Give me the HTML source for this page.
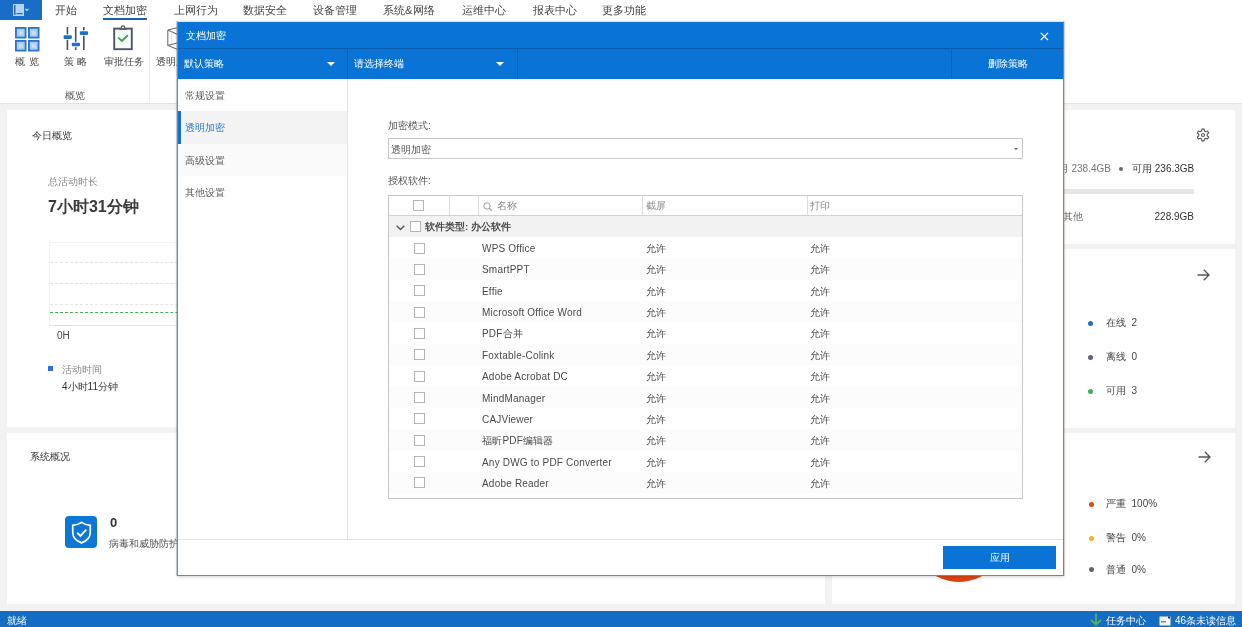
<!DOCTYPE html>
<html><head><meta charset="utf-8">
<style>
*{margin:0;padding:0;box-sizing:border-box}
html,body{-webkit-font-smoothing:antialiased;width:1242px;height:627px;overflow:hidden;background:#f2f2f2;font-family:"Liberation Sans",sans-serif;color:#333;font-size:10.4px}
.a{position:absolute;white-space:nowrap}
#root{position:absolute;left:0;top:0;width:1242px;height:627px;will-change:transform}
#menubar{position:absolute;left:0;top:0;width:1242px;height:20px;background:#fff}
#ribbon{position:absolute;left:0;top:20px;width:1242px;height:84px;background:#fff;border-bottom:1px solid #e2e2e2}
.tab{position:absolute;top:2px;font-size:11.3px;color:#444;line-height:16px}
.card{position:absolute;background:#fff}
#status{position:absolute;left:0;top:611px;width:1242px;height:16px;background:#146dc3;color:#fff}
#dlg{position:absolute;left:177px;top:21px;width:887px;height:555px;background:#fff;border:1px solid #7189a3;border-top-color:#dfe6ee;border-right-color:#5a8cc4;box-shadow:-1px 0 0 rgba(110,130,150,.35),1px 0 0 rgba(150,120,100,.25),0 1px 3px rgba(60,50,40,.22)}
.sb{padding-left:7px;line-height:34px;font-size:10px;color:#5a5a5a}
.lbl{font-size:10px;color:#555;line-height:12px}
.cb{width:11px;height:11px;border:1px solid #b4b4b4;background:#fff}
.td{font-size:10px;color:#4a4a4a;letter-spacing:0.2px}
.th{font-size:10px;color:#888;line-height:20px}
</style></head><body><div id="root">

<div id="menubar">
  <div class="a" style="left:0;top:0;width:42px;height:19.5px;background:#196dc6"></div>
  <svg class="a" style="left:12px;top:3px" width="18" height="14" viewBox="0 0 18 14"><rect x="1" y="1" width="11" height="12" fill="#b4d4f4"/><rect x="2.2" y="2" width="1.2" height="10" fill="#1c4f8a"/><rect x="4.5" y="10.2" width="6" height="1" fill="#1c4f8a"/><path d="M13.3 5.8 L14.9 7.4 L16.5 5.8" fill="none" stroke="#c0dcf7" stroke-width="1.1"/></svg>
  <div class="tab" style="left:55px">开始</div>
  <div class="tab" style="left:103px">文档加密</div>
  <div class="a" style="left:103px;top:18px;width:44px;height:2px;background:#1a5fb4"></div>
  <div class="tab" style="left:174px">上网行为</div>
  <div class="tab" style="left:243px">数据安全</div>
  <div class="tab" style="left:312.5px">设备管理</div>
  <div class="tab" style="left:383px">系统&amp;网络</div>
  <div class="tab" style="left:462px">运维中心</div>
  <div class="tab" style="left:532.5px">报表中心</div>
  <div class="tab" style="left:602px">更多功能</div>
</div>

<div id="ribbon">
  <svg class="a" style="left:15px;top:7px" width="25" height="25" viewBox="0 0 25 25">
    <g fill="#a9cdf2" stroke="#2a74c9" stroke-width="1.8">
      <rect x="0.9" y="0.9" width="9.7" height="9.7"/><rect x="13.9" y="0.9" width="9.7" height="9.7"/>
      <rect x="0.9" y="13.9" width="9.7" height="9.7"/><rect x="13.9" y="13.9" width="9.7" height="9.7"/>
    </g>
    <g fill="#c9def5"><rect x="3.8" y="3.8" width="4" height="4"/><rect x="16.8" y="3.8" width="4" height="4"/><rect x="3.8" y="16.8" width="4" height="4"/><rect x="16.8" y="16.8" width="4" height="4"/></g>
  </svg>
  <div class="a" style="left:15px;top:35px;font-size:10.4px;color:#444;letter-spacing:4.2px">概览</div>
  <svg class="a" style="left:63px;top:7px" width="26" height="24" viewBox="0 0 26 24">
    <g stroke="#4a4f57" stroke-width="1.6"><line x1="4.4" y1="0" x2="4.4" y2="23"/><line x1="12.7" y1="0" x2="12.7" y2="23"/><line x1="20.8" y1="0" x2="20.8" y2="23"/></g>
    <g fill="#fff"><rect x="0.8" y="7.4" width="7.8" height="5.4"/><rect x="9" y="14.8" width="7.8" height="5.4"/><rect x="17" y="3.4" width="7.9" height="5.4"/></g><g fill="#1f6fc6"><rect x="0.6" y="8.3" width="8.2" height="3.6" rx="0.8"/><rect x="8.8" y="15.7" width="8.2" height="3.6" rx="0.8"/><rect x="16.8" y="4.3" width="8.2" height="3.6" rx="0.8"/></g>
  </svg>
  <div class="a" style="left:63.5px;top:35px;font-size:10.4px;color:#444;letter-spacing:3.6px">策略</div>
  <svg class="a" style="left:112px;top:5px" width="22" height="26" viewBox="0 0 22 26">
    <rect x="2.2" y="3.6" width="17.6" height="20.6" fill="#f6fbf6" stroke="#4d566a" stroke-width="1.9"/>
    <path d="M7.3 3.6 H14.7 V4.8 H7.3 Z" fill="#4d566a"/>
    <circle cx="11" cy="2.4" r="1.6" fill="#fff" stroke="#4d566a" stroke-width="1.3"/>
    <path d="M6.2 12.6 L9.9 16 L15.8 10.2" fill="none" stroke="#46a04e" stroke-width="1.9"/>
  </svg>
  <div class="a" style="left:104px;top:35px;font-size:10px;color:#444">审批任务</div>
  <div class="a" style="left:149px;top:6px;width:1px;height:76px;background:#ededed"></div>
  <svg class="a" style="left:166px;top:7px" width="14" height="24" viewBox="0 0 14 24">
    <g fill="none" stroke="#6f6f6f" stroke-width="1.1"><path d="M1.8 3 L13 0.3 M1.8 3 L1.8 18.5 L13 23 M1.8 3 L13 8 M1.8 18.5 L13 15.5"/></g><path d="M5.5 4.5 L5.5 17" stroke="#ddd" stroke-width="0.8"/>
  </svg>
  <div class="a" style="left:156px;top:35px;font-size:10px;color:#444">透明加密</div>
  <div class="a" style="left:65px;top:69px;font-size:10.4px;color:#555">概览</div>
</div>

<div class="card" style="left:7px;top:110px;width:818px;height:317px">
  <div class="a" style="left:25px;top:19px;font-size:10px;color:#333;line-height:14px">今日概览</div>
  <div class="a" style="left:41px;top:65px;font-size:10px;color:#888;line-height:14px">总活动时长</div>
  <div class="a" style="left:41px;top:87px;font-size:16px;font-weight:bold;color:#3a3a3a;line-height:20px">7小时31分钟</div>
  <div class="a" style="left:42px;top:132px;width:780px;height:84px;border-left:1px solid #f2f2f2;border-top:1px solid #f2f2f2;border-bottom:1px solid #e8e8e8"></div>
  <div class="a" style="left:43px;top:152px;width:780px;border-top:1px dashed #e2e2e2"></div>
  <div class="a" style="left:43px;top:173px;width:780px;border-top:1px dashed #e2e2e2"></div>
  <div class="a" style="left:43px;top:194px;width:780px;border-top:1px dashed #e2e2e2"></div>
  <div class="a" style="left:43px;top:202px;width:780px;border-top:1px dashed #4caa50"></div>
  <div class="a" style="left:48px;top:214.5px;width:17px;height:1.5px;background:#d6d6d6"></div>
  <div class="a" style="left:50px;top:219px;font-size:10px;color:#444;line-height:14px">0H</div>
  <div class="a" style="left:41px;top:256px;width:5px;height:5px;background:#2f6fd6"></div>
  <div class="a" style="left:55px;top:252.5px;font-size:10px;color:#888;line-height:14px">活动时间</div>
  <div class="a" style="left:55px;top:270px;font-size:10px;color:#333;line-height:14px">4小时11分钟</div>
</div>
<div class="card" style="left:7px;top:433px;width:818px;height:171px">
  <div class="a" style="left:23px;top:17px;font-size:10px;color:#333;line-height:14px">系统概况</div>
  <div class="a" style="left:58px;top:83px;width:32px;height:32px;background:#0b78d8;border-radius:4px"></div>
  <svg class="a" style="left:62.5px;top:87.5px" width="23" height="23" viewBox="0 0 20 20"><path d="M10 1.2 C12.3 2.8 14.5 3.6 17.6 3.8 L17.6 10 C17.6 14.5 14 17.5 10 19 C6 17.5 2.4 14.5 2.4 10 L2.4 3.8 C5.5 3.6 7.7 2.8 10 1.2 Z" fill="none" stroke="#fff" stroke-width="1.5"/><path d="M6.3 10.2 L9.1 13 L14.2 7.6" fill="none" stroke="#fff" stroke-width="1.6"/></svg>
  <div class="a" style="left:103px;top:83px;font-size:13px;font-weight:bold;color:#333;line-height:14px">0</div>
  <div class="a" style="left:102px;top:104px;font-size:10px;color:#555;line-height:14px">病毒和威胁防护</div>
</div>
<div class="card" style="left:832px;top:110px;width:403px;height:134px">
  <svg class="a" style="left:363.5px;top:17.5px" width="14" height="14" viewBox="0 0 14 14"><path d="M5.86 1.11 L8.14 1.11 L8.40 2.93 L9.82 3.75 L11.53 3.06 L12.67 5.05 L11.22 6.18 L11.22 7.82 L12.67 8.95 L11.53 10.94 L9.82 10.25 L8.40 11.07 L8.14 12.89 L5.86 12.89 L5.60 11.07 L4.18 10.25 L2.47 10.94 L1.33 8.95 L2.78 7.82 L2.78 6.18 L1.33 5.05 L2.47 3.06 L4.18 3.75 L5.60 2.93Z" fill="none" stroke="#555" stroke-width="1.1" stroke-linejoin="round"/><circle cx="7" cy="7" r="1.5" fill="none" stroke="#555" stroke-width="1.1"/></svg>
  <div class="a" style="left:216px;top:52px;font-size:10px;color:#666;line-height:14px">已用</div><div class="a" style="left:239.5px;top:52px;font-size:10px;color:#777;line-height:14px">238.4GB</div>
  <div class="a" style="left:287px;top:57px;width:4px;height:4px;border-radius:50%;background:#666"></div>
  <div class="a" style="left:300px;top:52px;font-size:10px;color:#333;line-height:14px">可用 236.3GB</div>
  <div class="a" style="left:180px;top:79px;width:182px;height:5px;background:#e6e6e6"></div>
  <div class="a" style="left:231px;top:100px;font-size:10px;color:#666;line-height:14px">其他</div>
  <div class="a" style="left:300px;top:100px;width:62px;text-align:right;font-size:10px;color:#333;line-height:14px">228.9GB</div>
</div>
<div class="card" style="left:832px;top:249px;width:403px;height:179px">
  <svg class="a" style="left:365px;top:20px" width="13" height="12" viewBox="0 0 13 12"><path d="M0.5 6 H12 M6.8 0.8 L12 6 L6.8 11.2" fill="none" stroke="#555" stroke-width="1.3"/></svg>
  <div class="a" style="left:256px;top:72px;width:5px;height:5px;border-radius:50%;background:#1f6fc6"></div>
  <div class="a" style="left:274px;top:67px;font-size:10px;color:#444;line-height:14px">在线&nbsp;&nbsp;2</div>
  <div class="a" style="left:256px;top:106px;width:5px;height:5px;border-radius:50%;background:#5b6478"></div>
  <div class="a" style="left:274px;top:101px;font-size:10px;color:#444;line-height:14px">离线&nbsp;&nbsp;0</div>
  <div class="a" style="left:256px;top:139.5px;width:5px;height:5px;border-radius:50%;background:#3cb04a"></div>
  <div class="a" style="left:274px;top:134.5px;font-size:10px;color:#444;line-height:14px">可用&nbsp;&nbsp;3</div>
</div>
<div class="card" style="left:832px;top:433px;width:403px;height:171px">
  <div class="a" style="left:79px;top:53px;width:96px;height:96px;border-radius:50%;background:#dd4210"></div>
  <svg class="a" style="left:366px;top:18px" width="13" height="12" viewBox="0 0 13 12"><path d="M0.5 6 H12 M6.8 0.8 L12 6 L6.8 11.2" fill="none" stroke="#555" stroke-width="1.3"/></svg>
  <div class="a" style="left:257px;top:69px;width:5px;height:5px;border-radius:50%;background:#d4451a"></div>
  <div class="a" style="left:274px;top:64px;font-size:10px;color:#444;line-height:14px">严重&nbsp;&nbsp;100%</div>
  <div class="a" style="left:257px;top:103px;width:5px;height:5px;border-radius:50%;background:#f0b429"></div>
  <div class="a" style="left:274px;top:98px;font-size:10px;color:#444;line-height:14px">警告&nbsp;&nbsp;0%</div>
  <div class="a" style="left:257px;top:134px;width:5px;height:5px;border-radius:50%;background:#666"></div>
  <div class="a" style="left:274px;top:129.5px;font-size:10px;color:#444;line-height:14px">普通&nbsp;&nbsp;0%</div>
</div>

<div id="status">
  <div class="a" style="left:7px;top:1px;line-height:17px;font-size:10px;color:#fff">就绪</div>
  <svg class="a" style="left:1089.5px;top:1.5px" width="12" height="15" viewBox="0 0 12 15"><path d="M6 0.5 V11.5 M1 7 L6 11.5 L11 7" fill="none" stroke="#55b45a" stroke-width="1.7"/><path d="M1 14.3 H11" stroke="#4f9f70" stroke-width="1"/></svg>
  <div class="a" style="left:1106px;top:1px;line-height:17px;font-size:10px;color:#fff">任务中心</div>
  <svg class="a" style="left:1158.5px;top:4.5px" width="12" height="10" viewBox="0 0 12 10"><rect x="0.5" y="0.5" width="11" height="9" fill="#f4f4f4"/><rect x="2" y="5" width="5" height="1.5" fill="#888"/><rect x="9" y="0.5" width="2" height="2" fill="#333"/></svg>
  <div class="a" style="left:1175px;top:1px;line-height:17px;font-size:10px;color:#fff">46条未读信息</div>
</div>

<div id="dlg">
  <div class="a" style="left:0;top:0;width:885px;height:26px;background:#0a74d6"></div>
  <div class="a" style="left:8px;top:0;line-height:27px;color:#fff;font-size:10px">文档加密</div>
  <svg class="a" style="left:862px;top:9.5px" width="9" height="9" viewBox="0 0 9 9"><path d="M0.8 0.8 L8 8 M8 0.8 L0.8 8" stroke="#fff" stroke-width="1.15"/></svg>
  <div class="a" style="left:0;top:26px;width:885px;height:1px;background:#0b5fae"></div>
  <div class="a" style="left:0;top:27px;width:885px;height:30px;background:#0a74d6"></div>
  <div class="a" style="left:169px;top:27px;width:1px;height:30px;background:#0b5fae"></div>
  <div class="a" style="left:339px;top:27px;width:1px;height:30px;background:#0b5fae"></div>
  <div class="a" style="left:773px;top:27px;width:1px;height:30px;background:#0b5fae"></div>
  <div class="a" style="left:6px;top:27px;line-height:30px;color:#fff;font-size:10px">默认策略</div>
  <div class="a" style="left:149px;top:40px;width:0;height:0;border-left:4px solid transparent;border-right:4px solid transparent;border-top:4px solid #fff"></div>
  <div class="a" style="left:176px;top:27px;line-height:30px;color:#fff;font-size:10px">请选择终端</div>
  <div class="a" style="left:318px;top:40px;width:0;height:0;border-left:4px solid transparent;border-right:4px solid transparent;border-top:4px solid #fff"></div>
  <div class="a" style="left:810px;top:27px;line-height:30px;color:#fff;font-size:10px">删除策略</div>

  <div class="a" style="left:169px;top:57px;width:1px;height:460px;background:#e3e3e3"></div>
  <div class="a sb" style="left:0;top:57px;width:169px;height:32px">常规设置</div>
  <div class="a sb" style="left:0;top:89px;width:169px;height:33px;background:#f3f3f3;color:#2a7bd0">透明加密</div>
  <div class="a" style="left:0;top:89px;width:3px;height:33px;background:#1a6fd0"></div>
  <div class="a sb" style="left:0;top:122px;width:169px;height:32px;background:#fafafa">高级设置</div>
  <div class="a sb" style="left:0;top:154px;width:169px;height:32px">其他设置</div>

  <div class="a lbl" style="left:210px;top:98px">加密模式:</div>
  <div class="a" style="left:210px;top:116px;width:635px;height:21px;border:1px solid #c8c8c8"></div>
  <div class="a lbl" style="left:213px;top:118px;line-height:20px">透明加密</div>
  <div class="a" style="left:836px;top:126px;width:0;height:0;border-left:2px solid transparent;border-right:2px solid transparent;border-top:2px solid #555"></div>
  <div class="a lbl" style="left:210px;top:153px">授权软件:</div>

  <div class="a" id="tbl" style="left:210px;top:173px;width:635px;height:304px;border:1px solid #c6c6c6;overflow:hidden">
    <div class="a" style="left:0;top:19px;width:634px;height:1px;background:#d2d2d2"></div>
    <div class="a cb" style="left:24px;top:4px"></div>
    <div class="a" style="left:60px;top:0;width:1px;height:19px;background:#dcdcdc"></div>
    <div class="a" style="left:89px;top:0;width:1px;height:19px;background:#dcdcdc"></div>
    <div class="a" style="left:253px;top:0;width:1px;height:19px;background:#dcdcdc"></div>
    <div class="a" style="left:418px;top:0;width:1px;height:19px;background:#dcdcdc"></div>
    <svg class="a" style="left:94px;top:6px" width="10" height="9" viewBox="0 0 10 9"><circle cx="4" cy="4" r="3.2" fill="none" stroke="#999" stroke-width="1"/><path d="M6.3 6.3 L8.8 8.8" stroke="#999" stroke-width="1.2"/></svg>
    <div class="a th" style="left:108px;top:0">名称</div>
    <div class="a th" style="left:257px;top:0">截屏</div>
    <div class="a th" style="left:421px;top:0">打印</div>
    <div class="a" style="left:0;top:20px;width:634px;height:22px;background:#f2f2f2"></div>
    <svg class="a" style="left:7px;top:29px" width="9" height="6" viewBox="0 0 9 6"><path d="M0.7 0.7 L4.5 4.5 L8.3 0.7" fill="none" stroke="#555" stroke-width="1.3"/></svg>
    <div class="a cb" style="left:21px;top:25px"></div>
    <div class="a" style="left:36px;top:20px;line-height:22px;font-weight:bold;font-size:9.8px;color:#4a4a4a">软件类型: 办公软件</div>
    <div class="a" style="left:0;top:41.00px;width:634px;height:21.36px;background:#fff"></div>
<div class="a cb" style="left:25px;top:46.50px"></div>
<div class="a td" style="left:93px;top:42.00px;line-height:21.36px">WPS Office</div>
<div class="a td" style="left:257px;top:42.00px;line-height:21.36px">允许</div>
<div class="a td" style="left:421px;top:42.00px;line-height:21.36px">允许</div>
<div class="a" style="left:0;top:62.36px;width:634px;height:21.36px;background:#fcfcfc"></div>
<div class="a cb" style="left:25px;top:67.86px"></div>
<div class="a td" style="left:93px;top:63.36px;line-height:21.36px">SmartPPT</div>
<div class="a td" style="left:257px;top:63.36px;line-height:21.36px">允许</div>
<div class="a td" style="left:421px;top:63.36px;line-height:21.36px">允许</div>
<div class="a" style="left:0;top:83.72px;width:634px;height:21.36px;background:#fff"></div>
<div class="a cb" style="left:25px;top:89.22px"></div>
<div class="a td" style="left:93px;top:84.72px;line-height:21.36px">Effie</div>
<div class="a td" style="left:257px;top:84.72px;line-height:21.36px">允许</div>
<div class="a td" style="left:421px;top:84.72px;line-height:21.36px">允许</div>
<div class="a" style="left:0;top:105.08px;width:634px;height:21.36px;background:#fcfcfc"></div>
<div class="a cb" style="left:25px;top:110.58px"></div>
<div class="a td" style="left:93px;top:106.08px;line-height:21.36px">Microsoft Office Word</div>
<div class="a td" style="left:257px;top:106.08px;line-height:21.36px">允许</div>
<div class="a td" style="left:421px;top:106.08px;line-height:21.36px">允许</div>
<div class="a" style="left:0;top:126.44px;width:634px;height:21.36px;background:#fff"></div>
<div class="a cb" style="left:25px;top:131.94px"></div>
<div class="a td" style="left:93px;top:127.44px;line-height:21.36px">PDF合并</div>
<div class="a td" style="left:257px;top:127.44px;line-height:21.36px">允许</div>
<div class="a td" style="left:421px;top:127.44px;line-height:21.36px">允许</div>
<div class="a" style="left:0;top:147.80px;width:634px;height:21.36px;background:#fcfcfc"></div>
<div class="a cb" style="left:25px;top:153.30px"></div>
<div class="a td" style="left:93px;top:148.80px;line-height:21.36px">Foxtable-Colink</div>
<div class="a td" style="left:257px;top:148.80px;line-height:21.36px">允许</div>
<div class="a td" style="left:421px;top:148.80px;line-height:21.36px">允许</div>
<div class="a" style="left:0;top:169.16px;width:634px;height:21.36px;background:#fff"></div>
<div class="a cb" style="left:25px;top:174.66px"></div>
<div class="a td" style="left:93px;top:170.16px;line-height:21.36px">Adobe Acrobat DC</div>
<div class="a td" style="left:257px;top:170.16px;line-height:21.36px">允许</div>
<div class="a td" style="left:421px;top:170.16px;line-height:21.36px">允许</div>
<div class="a" style="left:0;top:190.52px;width:634px;height:21.36px;background:#fcfcfc"></div>
<div class="a cb" style="left:25px;top:196.02px"></div>
<div class="a td" style="left:93px;top:191.52px;line-height:21.36px">MindManager</div>
<div class="a td" style="left:257px;top:191.52px;line-height:21.36px">允许</div>
<div class="a td" style="left:421px;top:191.52px;line-height:21.36px">允许</div>
<div class="a" style="left:0;top:211.88px;width:634px;height:21.36px;background:#fff"></div>
<div class="a cb" style="left:25px;top:217.38px"></div>
<div class="a td" style="left:93px;top:212.88px;line-height:21.36px">CAJViewer</div>
<div class="a td" style="left:257px;top:212.88px;line-height:21.36px">允许</div>
<div class="a td" style="left:421px;top:212.88px;line-height:21.36px">允许</div>
<div class="a" style="left:0;top:233.24px;width:634px;height:21.36px;background:#fcfcfc"></div>
<div class="a cb" style="left:25px;top:238.74px"></div>
<div class="a td" style="left:93px;top:234.24px;line-height:21.36px">福昕PDF编辑器</div>
<div class="a td" style="left:257px;top:234.24px;line-height:21.36px">允许</div>
<div class="a td" style="left:421px;top:234.24px;line-height:21.36px">允许</div>
<div class="a" style="left:0;top:254.60px;width:634px;height:21.36px;background:#fff"></div>
<div class="a cb" style="left:25px;top:260.10px"></div>
<div class="a td" style="left:93px;top:255.60px;line-height:21.36px">Any DWG to PDF Converter</div>
<div class="a td" style="left:257px;top:255.60px;line-height:21.36px">允许</div>
<div class="a td" style="left:421px;top:255.60px;line-height:21.36px">允许</div>
<div class="a" style="left:0;top:275.96px;width:634px;height:21.36px;background:#fcfcfc"></div>
<div class="a cb" style="left:25px;top:281.46px"></div>
<div class="a td" style="left:93px;top:276.96px;line-height:21.36px">Adobe Reader</div>
<div class="a td" style="left:257px;top:276.96px;line-height:21.36px">允许</div>
<div class="a td" style="left:421px;top:276.96px;line-height:21.36px">允许</div>

  </div>

  <div class="a" style="left:0;top:517px;width:885px;height:1px;background:#e3e3e3"></div>
  <div class="a" style="left:765px;top:524px;width:113px;height:23px;background:#0a74d6;color:#fff;text-align:center;line-height:23px;font-size:10px">应用</div>
</div>

</div></body></html>
